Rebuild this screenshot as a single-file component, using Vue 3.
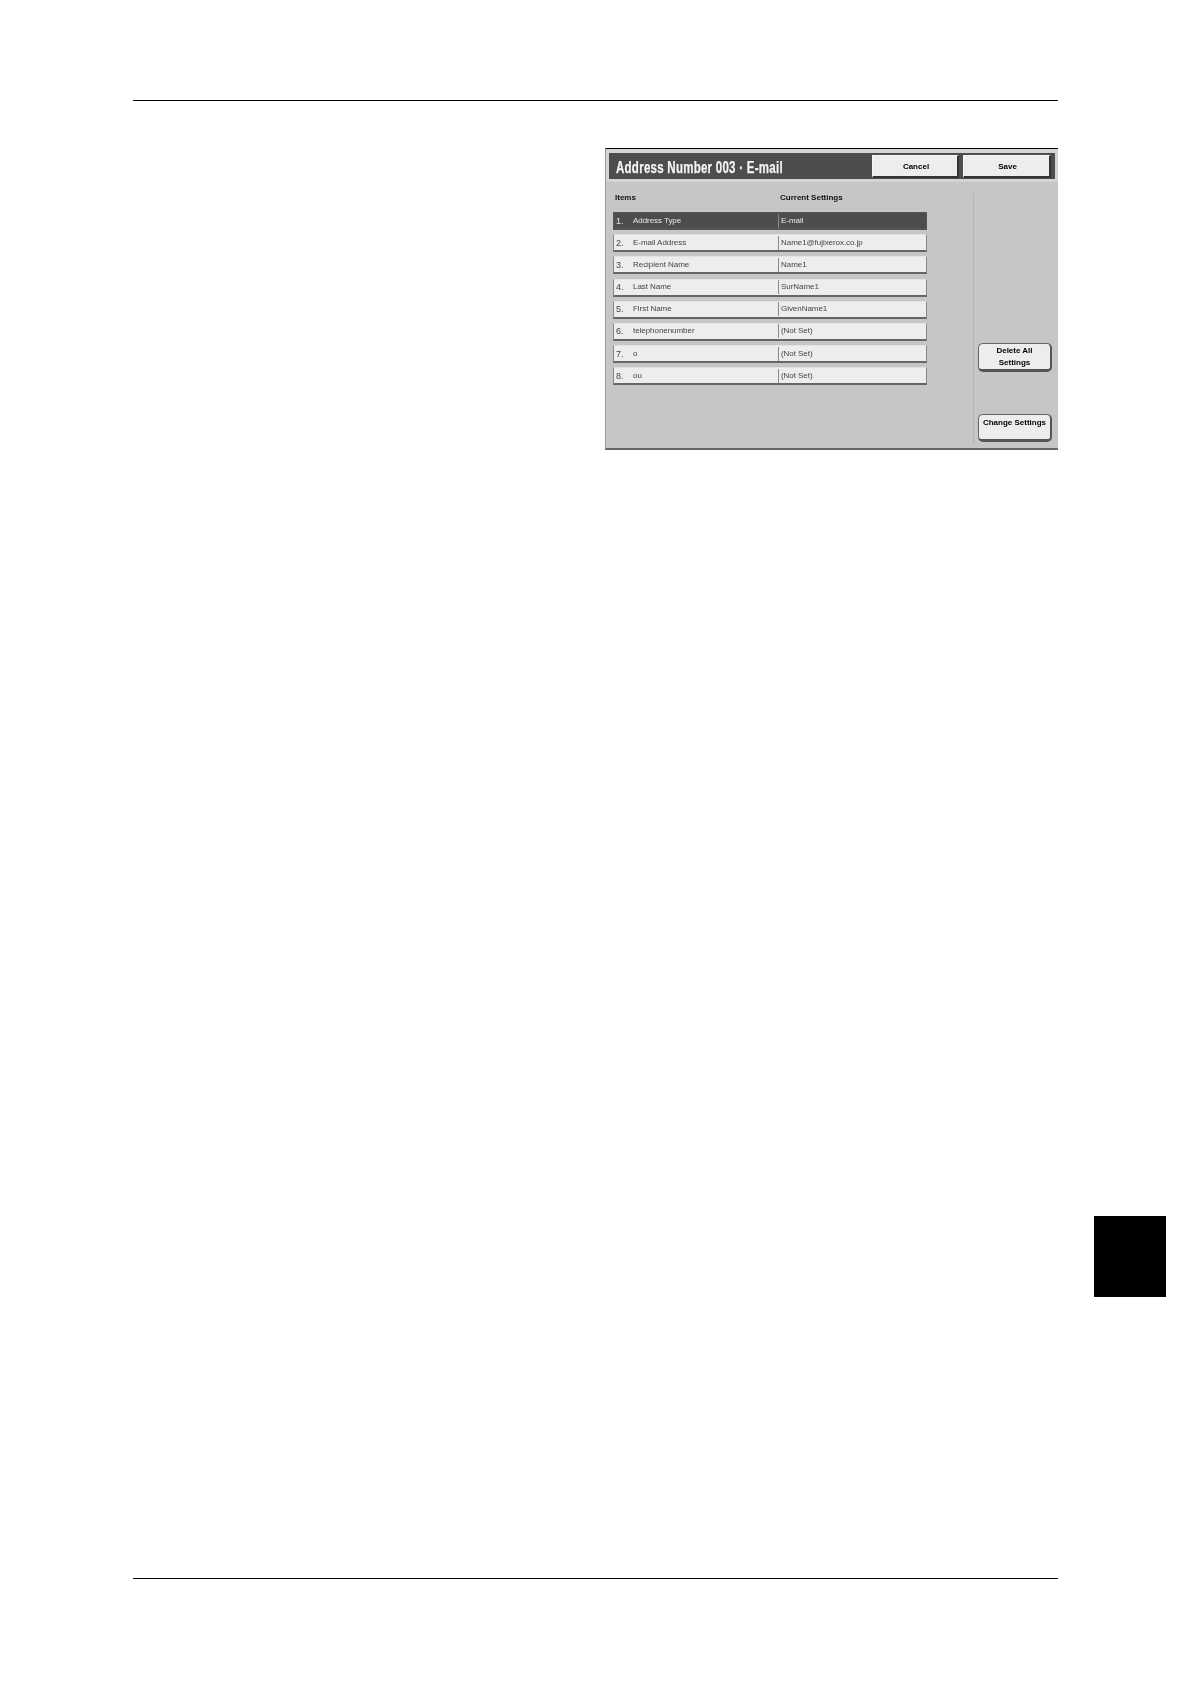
<script setup>
const rows = [
  { no: "1.", item: "Address Type", value: "E-mail", active: true },
  { no: "2.", item: "E-mail Address", value: "Name1@fujixerox.co.jp" },
  { no: "3.", item: "Recipient Name", value: "Name1" },
  { no: "4.", item: "Last Name", value: "SurName1" },
  { no: "5.", item: "First Name", value: "GivenName1" },
  { no: "6.", item: "telephonenumber", value: "(Not Set)" },
  { no: "7.", item: "o", value: "(Not Set)" },
  { no: "8.", item: "ou", value: "(Not Set)" },
];
</script>

<template>
  <div class="page">
    <div class="rule"></div>
    <div class="top-area">
      <div class="panel">
        <div class="title-wrap">
          <div class="title-bar">
            <h1 class="title">Address Number 003 · E-mail</h1>
            <div class="title-buttons">
              <button class="btn-top btn-cancel">Cancel</button>
              <button class="btn-top btn-save">Save</button>
            </div>
          </div>
        </div>
        <div class="panel-body">
          <div class="list">
            <div class="list-head">
              <span class="head-items">Items</span>
              <span>Current Settings</span>
            </div>
            <div
              v-for="row in rows"
              :key="row.no"
              class="row"
              :class="{ active: row.active }"
            >
              <span class="row-no">{{ row.no }}</span>
              <span class="row-item">{{ row.item }}</span>
              <span class="row-value">{{ row.value }}</span>
            </div>
          </div>
          <div class="side">
            <button class="btn-side btn-delete">Delete All<br />Settings</button>
            <button class="btn-side btn-change">Change Settings</button>
          </div>
        </div>
      </div>
    </div>
    <div class="spacer"></div>
    <div class="rule"></div>
    <div class="tab"></div>
  </div>
</template>

<style scoped>
.page {
  position: relative;
  width: 1190px;
  height: 1684px;
  box-sizing: border-box;
  padding: 100px 132px 105px 133px;
  display: flex;
  flex-direction: column;
  background: #fff;
  overflow: hidden;
}

.rule {
  height: 1px;
  background: #000;
  flex: none;
}

.top-area {
  display: flex;
  justify-content: flex-end;
  padding-top: 47px;
}

.spacer {
  flex: 1;
}

.panel {
  width: 453px;
  height: 302px;
  box-sizing: border-box;
  background: #c6c6c6;
  border-top: 1px solid #000;
  border-left: 1px solid #9a9a9a;
  border-bottom: 2px solid #666;
  display: flex;
  flex-direction: column;
  filter: blur(0.45px);
  font-family: "Liberation Sans", Arial, sans-serif;
}

.title-wrap {
  padding: 4px 3px 3px 3px;
  background: #d4d4d4;
}

.title-bar {
  height: 26px;
  background: #4d4d4d;
  display: flex;
  align-items: center;
  justify-content: space-between;
  padding: 1px 4px 0 7px;
  box-sizing: border-box;
}

.title {
  margin: 2px 0 0;
  color: #f4f4f4;
  font-family: "Liberation Sans", sans-serif;
  font-size: 16px;
  font-weight: 700;
  letter-spacing: 0.35px;
  white-space: nowrap;
  -webkit-text-stroke: 0.25px #f4f4f4;
  transform: scaleX(0.72);
  transform-origin: left center;
}

.title-buttons {
  display: flex;
  gap: 4px;
}

.btn-top {
  height: 23px;
  background: #ededed;
  border: 1px solid #f8f8f8;
  border-right: 2px solid #333;
  border-bottom: 2px solid #333;
  box-sizing: border-box;
  padding: 1px 0 0 2px;
  font-family: "Liberation Sans", Arial, sans-serif;
  font-size: 8px;
  font-weight: 700;
  color: #000;
}

.btn-cancel {
  width: 87px;
}

.btn-save {
  width: 88px;
}

.panel-body {
  flex: 1;
  display: flex;
  min-height: 0;
}

.list {
  width: 367px;
  box-sizing: border-box;
  padding: 0 0 0 7px;
}

.list-head {
  height: 30px;
  display: flex;
  align-items: center;
  padding-left: 2px;
  font-size: 8px;
  font-weight: 700;
  color: #111;
}

.head-items {
  width: 165px;
  flex: none;
}

.row {
  width: 314px;
  height: 18px;
  margin-bottom: 4.2px;
  box-sizing: border-box;
  display: flex;
  align-items: center;
  background: #ededed;
  border-top: 1px solid #e2e2e2;
  border-left: 1px solid #888;
  border-right: 1px solid #888;
  border-bottom: 2px solid #666;
  font-size: 8px;
  line-height: 14px;
  letter-spacing: -0.05px;
  color: #444;
}

.row.active {
  background: #4d4d4d;
  border-color: #555;
  color: #e8e8e8;
}

.row-no {
  width: 19px;
  padding-left: 2px;
  box-sizing: border-box;
  flex: none;
  font-size: 9px;
}

.row-item {
  width: 145px;
  flex: none;
}

.row-value {
  flex: 1;
  padding-left: 2px;
  border-left: 1px solid #8a8a8a;
}

.side {
  flex: 1;
  margin: 11px 0 4px 0;
  padding: 150px 6px 2px 4px;
  border-left: 1px solid #b4b4b4;
  display: flex;
  flex-direction: column;
  justify-content: space-between;
  align-items: flex-end;
}

.btn-side {
  width: 74px;
  background: #ededed;
  border: 1px solid #666;
  border-right: 2px solid #555;
  border-bottom: 3px solid #555;
  border-radius: 5px;
  padding: 0;
  box-sizing: border-box;
  font-family: "Liberation Sans", Arial, sans-serif;
  font-size: 8px;
  font-weight: 700;
  color: #000;
}

.btn-delete {
  height: 29px;
  line-height: 12px;
}

.btn-change {
  height: 28px;
  padding-bottom: 10px;
}

.tab {
  position: absolute;
  left: 1094px;
  top: 1216px;
  width: 72px;
  height: 81px;
  background: #000;
}
</style>

<style>
html,
body {
  background: #fff;
}
</style>
